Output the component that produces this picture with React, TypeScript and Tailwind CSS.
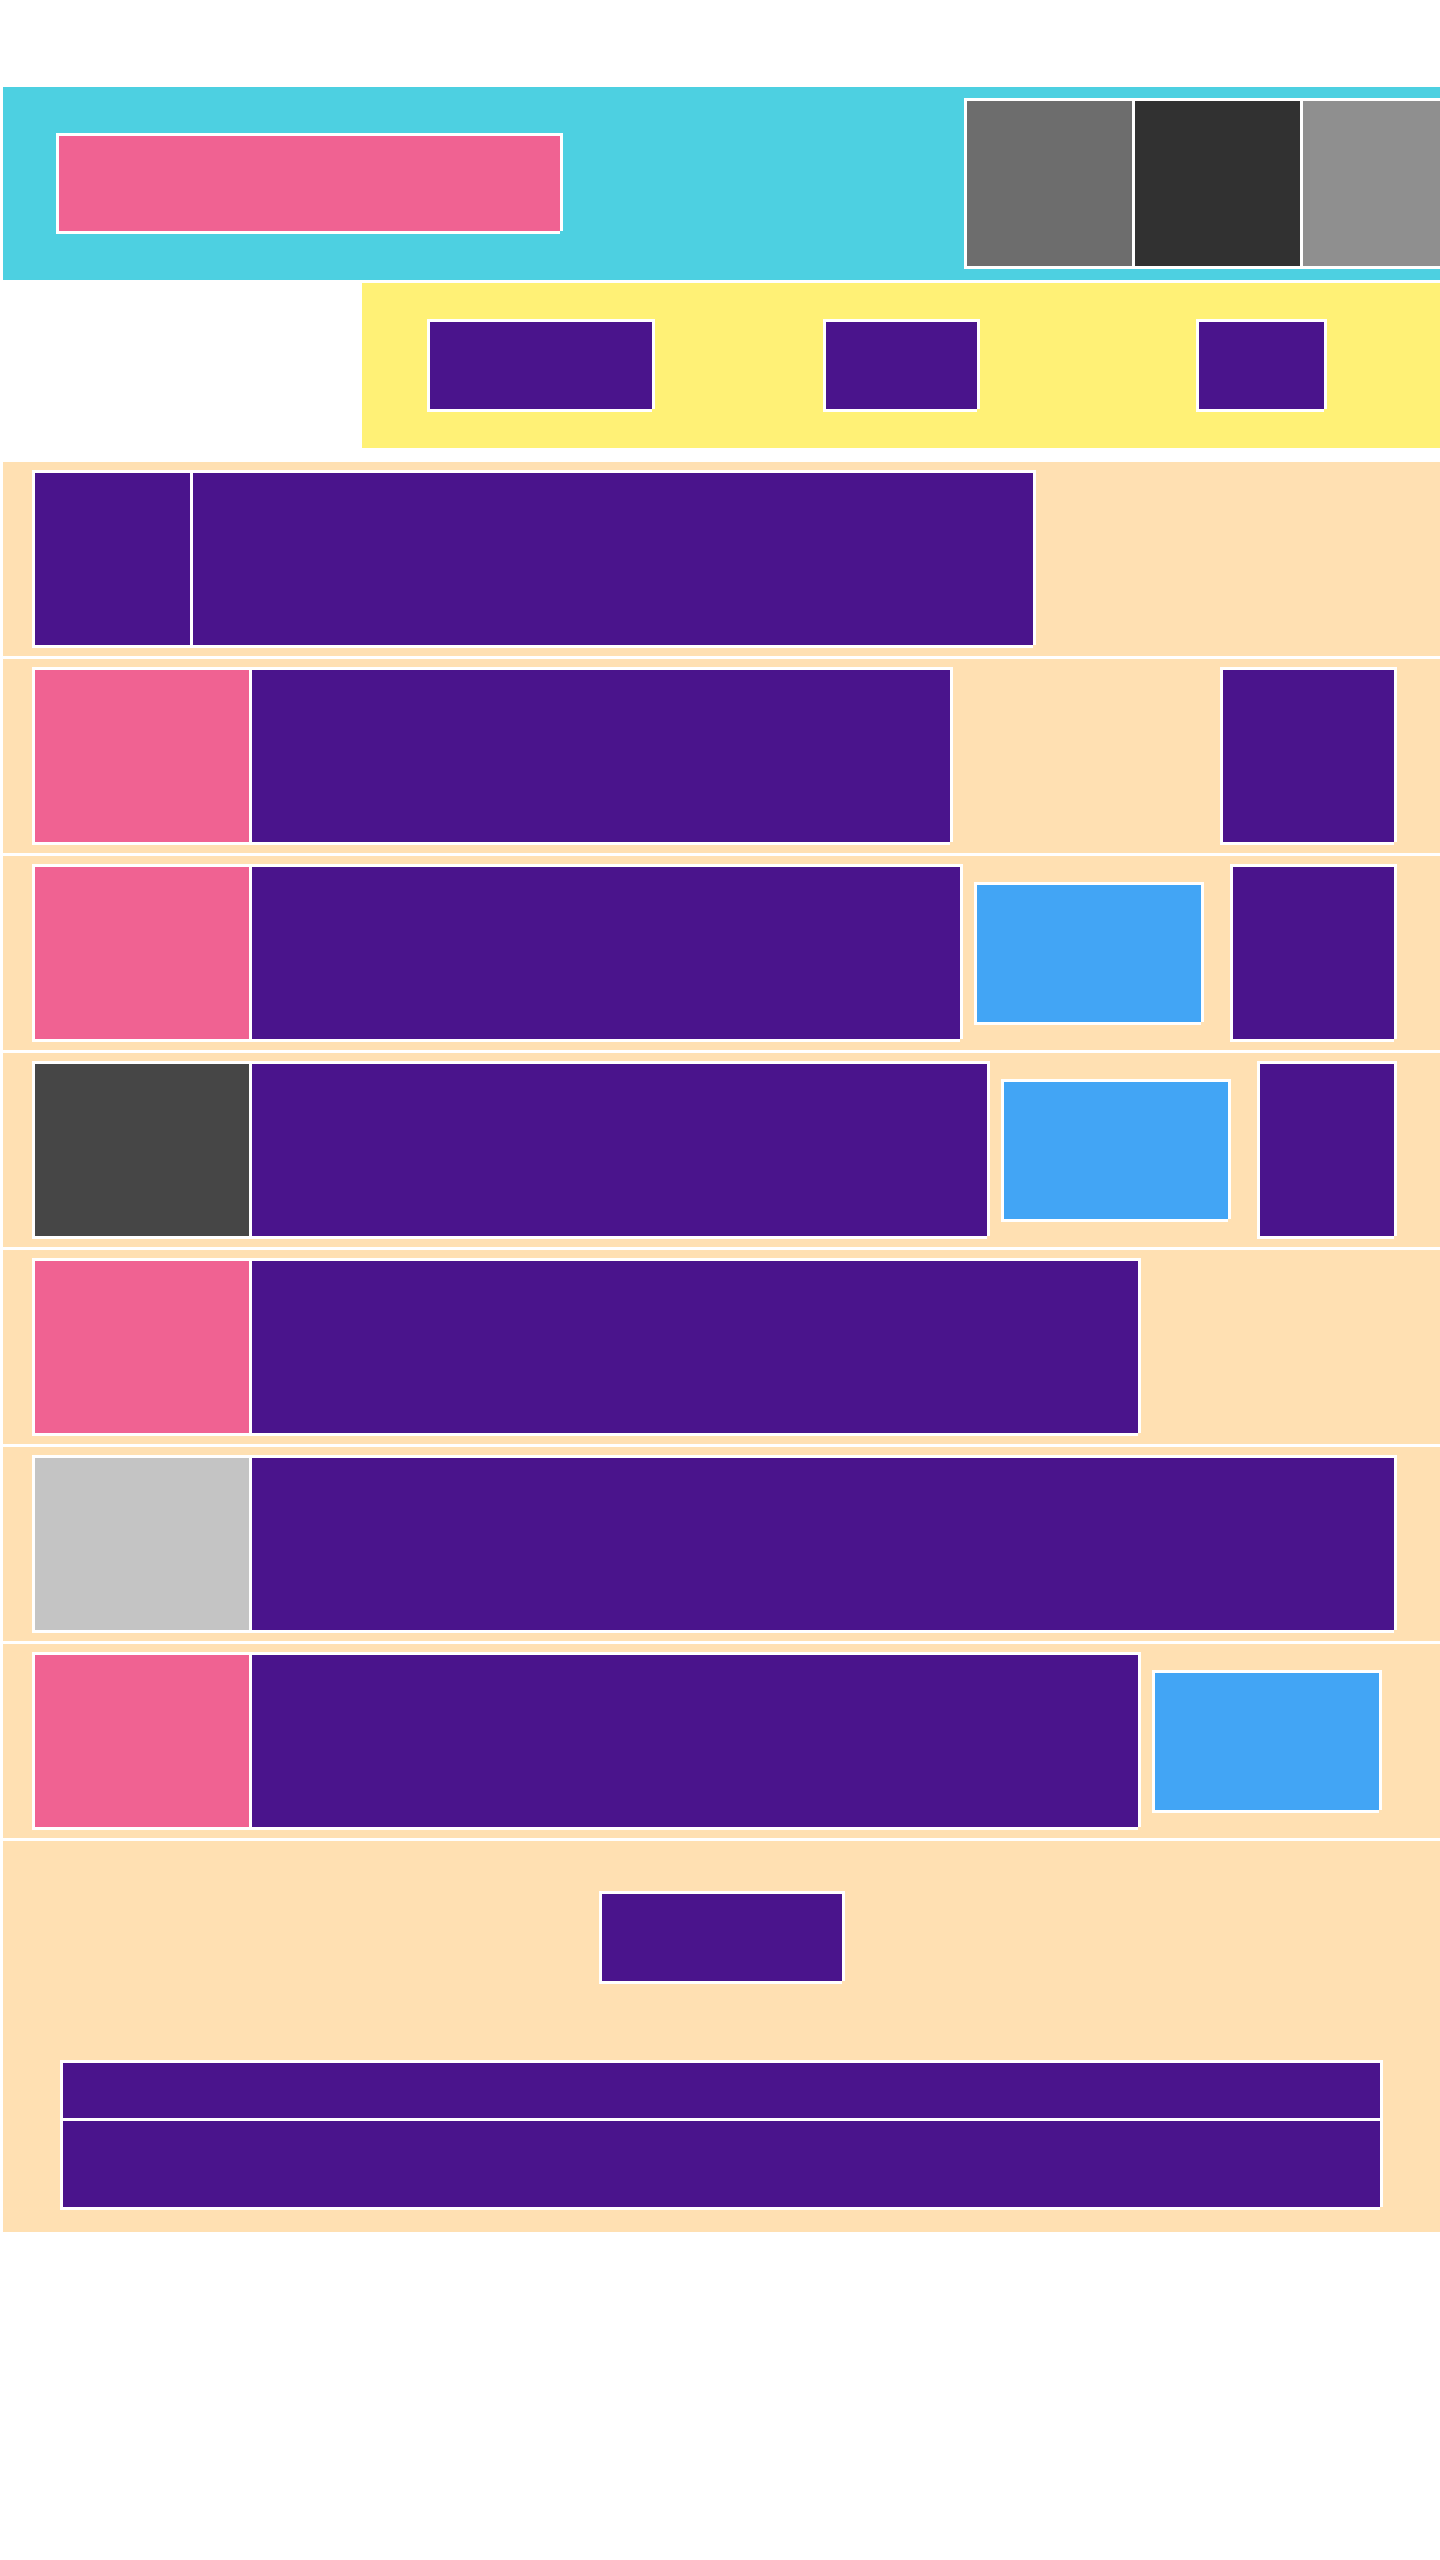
// wireframe blocks: every box gets a 3px white frame (notched at bottom-right)
const FRAME =
  "shadow-[-3px_-3px_0_#fff,3px_-3px_0_#fff,-3px_3px_0_#fff,3px_0_0_#fff,0_3px_0_#fff]";

const PURPLE = "bg-[#4a148c]";

type Row = {
  thumb: string;
  thumbW: string;
  title: string;
  action?: boolean;
  meta?: string;
};

const ROWS: Row[] = [
  { thumb: PURPLE, thumbW: "w-[155px]", title: "w-[840px]" },
  { thumb: "bg-[#f06292]", thumbW: "w-[214px]", title: "w-[698px]", meta: "w-[171px]" },
  { thumb: "bg-[#f06292]", thumbW: "w-[214px]", title: "w-[708px]", action: true, meta: "w-[161px]" },
  { thumb: "bg-[#464646]", thumbW: "w-[214px]", title: "w-[735px]", action: true, meta: "w-[134px]" },
  { thumb: "bg-[#f06292]", thumbW: "w-[214px]", title: "w-[886px]" },
  { thumb: "bg-[#c4c4c4]", thumbW: "w-[214px]", title: "w-[1142px]" },
  { thumb: "bg-[#f06292]", thumbW: "w-[214px]", title: "w-[886px]", action: true },
];

const SLIDES = ["bg-[#6d6d6d]", "bg-[#313131]", "bg-[#8f8f8f]"];

function Header() {
  return (
    <header className={`${FRAME} flex h-[193px] items-center overflow-hidden bg-[#4dd0e1] pl-[56px]`}>
      <div className={`${FRAME} h-[95px] w-[501px] shrink-0 bg-[#f06292]`} />
      <div className="ml-[407px] flex shrink-0 gap-[3px]">
        {SLIDES.map((c) => (
          <div key={c} className={`${FRAME} h-[165px] w-[165px] shrink-0 ${c}`} />
        ))}
      </div>
    </header>
  );
}

function Nav() {
  return (
    <nav className={`${FRAME} ml-[359px] mt-[3px] flex h-[165px] items-center bg-[#fff176] pl-[68px]`}>
      <div className={`${FRAME} h-[87px] w-[222px] ${PURPLE}`} />
      <div className={`${FRAME} ml-[174px] h-[87px] w-[151px] ${PURPLE}`} />
      <div className={`${FRAME} ml-[222px] h-[87px] w-[125px] ${PURPLE}`} />
    </nav>
  );
}

function ListRow({ row }: { row: Row }) {
  return (
    <div className={`${FRAME} flex h-[194px] items-center bg-[#ffe0b2] pl-[32px] pr-[46px]`}>
      <div className={`${FRAME} h-[172px] shrink-0 ${row.thumbW} ${row.thumb}`} />
      <div className={`${FRAME} ml-[3px] h-[172px] shrink-0 ${row.title} ${PURPLE}`} />
      {row.action && <div className={`${FRAME} ml-[17px] h-[137px] w-[224px] shrink-0 bg-[#42a5f5]`} />}
      {row.meta && <div className={`${FRAME} ml-auto h-[172px] shrink-0 ${row.meta} ${PURPLE}`} />}
    </div>
  );
}

function Footer() {
  return (
    <footer className={`${FRAME} mt-[3px] flex h-[391px] flex-col items-center bg-[#ffe0b2] pt-[53px]`}>
      <div className={`${FRAME} h-[87px] w-[240px] ${PURPLE}`} />
      <div className="mt-[82px] flex w-[1317px] flex-col gap-[3px]">
        <div className={`${FRAME} h-[55px] ${PURPLE}`} />
        <div className={`${FRAME} h-[86px] ${PURPLE}`} />
      </div>
    </footer>
  );
}

export default function App() {
  return (
    <div className="min-h-[2560px] overflow-hidden bg-white pl-[3px] pt-[87px]">
      <Header />
      <Nav />
      <section className="mt-[14px] flex flex-col gap-[3px]">
        {ROWS.map((r, i) => (
          <ListRow key={i} row={r} />
        ))}
      </section>
      <Footer />
    </div>
  );
}
